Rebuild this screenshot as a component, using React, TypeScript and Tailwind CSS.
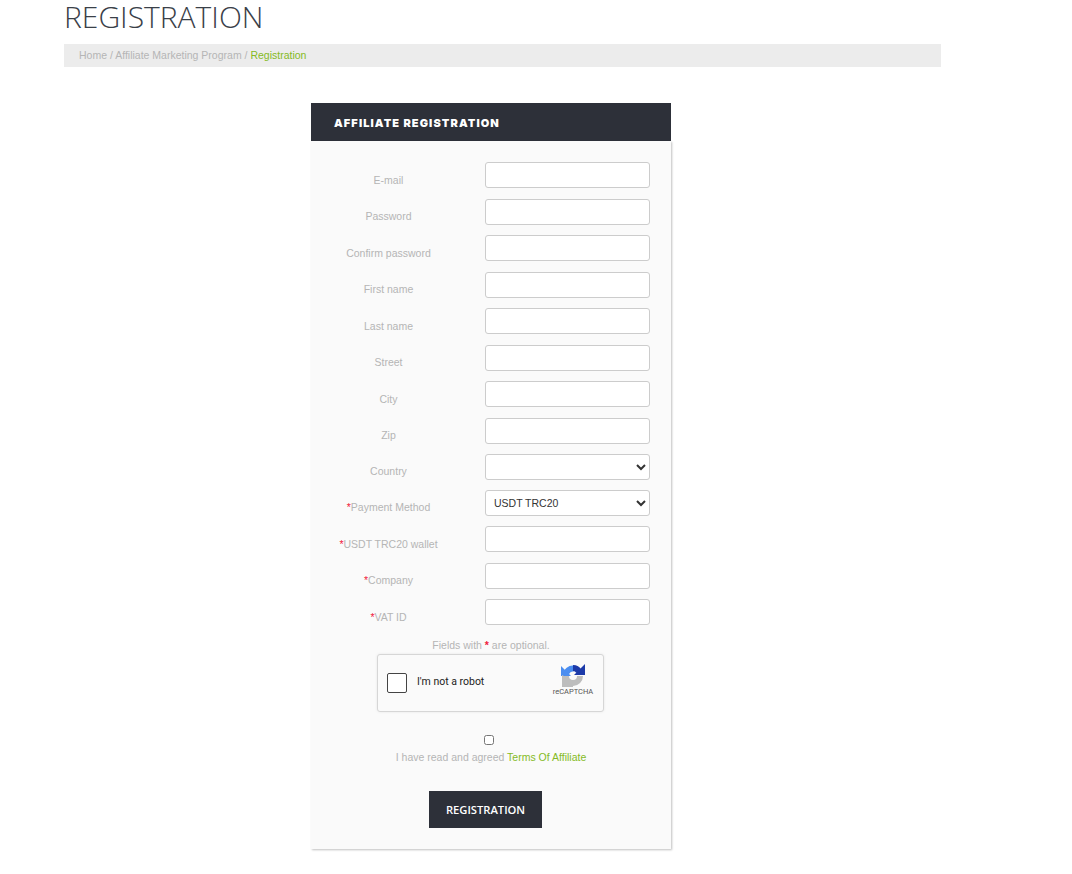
const FIELDS = [
  { label: "E-mail", h: "h-[36.5px]" },
  { label: "Password", h: "h-[36.5px]" },
  { label: "Confirm password", h: "h-[36.5px]" },
  { label: "First name", h: "h-[36.5px]" },
  { label: "Last name", h: "h-[36.5px]" },
  { label: "Street", h: "h-[36.5px]" },
  { label: "City", h: "h-[36.5px]" },
  { label: "Zip", h: "h-[36.5px]" },
  { label: "Country", h: "h-[36px]", select: true },
  { label: "Payment Method", h: "h-[36px]", select: true, mark: true, value: "USDT TRC20" },
  { label: "USDT TRC20 wallet", h: "h-[36.5px]", mark: true },
  { label: "Company", h: "h-[36.5px]", mark: true },
  { label: "VAT ID", h: "h-[36.5px]", mark: true },
];

function RecaptchaLogo() {
  return (
    <svg width="24" height="24" viewBox="0 0 24 24" fill="none">
      <path d="M13 5.5A7 7 0 0 0 5 12" stroke="#4a8df0" strokeWidth="6" />
      <path d="M0 3 L0 13 L10 13 Z" fill="#4a8df0" />
      <path d="M12 5A7 7 0 0 1 18 8.5" stroke="#1c3aa9" strokeWidth="6" />
      <path d="M24 1 L24 12 L13 12 Z" fill="#1c3aa9" />
      <path d="M19 13A7 7 0 0 1 5 13" stroke="#bdbdbd" strokeWidth="6" />
      <path d="M1 12 L1 24 L12 24 L12 18 Z" fill="#bdbdbd" />
    </svg>
  );
}

export default function App() {
  return (
    <div className="min-h-[874px] bg-white pl-[64px] font-['Liberation_Sans',Arial,sans-serif]">
      <h1 className="h-[44px] font-['Open_Sans',sans-serif] text-[30px] font-light leading-[34px] text-[#3a4048]">REGISTRATION</h1>
      <div className="flex h-[23px] w-[877px] items-center bg-[#ececec] pl-[15px] text-[10.5px] text-[#b5b5b5]">
        Home / Affiliate Marketing Program /&nbsp;<span className="text-[#85ba25]">Registration</span>
      </div>

      <div className="ml-[247px] mt-[36px] w-[360px]">
        <div className="flex h-[38px] items-center bg-[#2d3039] pl-[23px] pt-[3px] font-['Inter',sans-serif] text-[11px] font-black tracking-[1.1px] text-white">
          AFFILIATE REGISTRATION
        </div>
        <div className="h-[708px] bg-[#fafafa] pt-[21px] shadow-[1px_1px_2px_rgba(0,0,0,0.25)]">
          {FIELDS.map((f) => (
            <div key={f.label} className={`flex items-start ${f.h}`}>
              <label className={`${f.select ? "mt-[10px]" : "mt-[10.75px]"} w-[155px] text-center text-[10.5px] leading-[14px] text-[#b5b5b5]`}>
                {f.mark && <span className="text-[#f0203c]">*</span>}
                {f.label}
              </label>
              <div className="ml-[19px] w-[165px]">
                {f.select ? (
                  <select defaultValue={f.value ?? ""} className="h-[26px] w-full rounded-[3px] border border-[#cccccc] bg-white pl-[4px] text-[10.5px] text-[#333333]">
                    <option value=""></option>
                    <option value="USDT TRC20">USDT TRC20</option>
                  </select>
                ) : (
                  <input type="text" className="block h-[26px] w-full rounded-[3px] border border-[#cccccc] bg-white" />
                )}
              </div>
            </div>
          ))}

          <p className="mt-[2px] text-center text-[10.5px] leading-[14px] text-[#b5b5b5]">
            Fields with <span className="font-bold text-[#f0203c]">*</span> are optional.
          </p>
          <div className="ml-[66px] mt-[2px] flex h-[58px] w-[227px] items-center rounded-[3px] border border-[#d6d6d6] bg-[#fafafa] pl-[9px] shadow-[0_0_3px_rgba(0,0,0,0.08)]">
            <div className="h-[20px] w-[20px] rounded-[2px] border border-[#444444] bg-white" />
            <span className="mb-[2px] ml-[10px] font-['Roboto',sans-serif] text-[10.5px] text-[#222222]">I'm not a robot</span>
            <div className="mb-[6px] ml-auto mr-[9px] flex w-[42px] flex-col items-center">
              <RecaptchaLogo />
              <span className="whitespace-nowrap font-['Roboto',sans-serif] text-[7.5px] leading-[10px] text-[#555555]">reCAPTCHA</span>
            </div>
          </div>

          <div className="mt-[23px] flex justify-center pr-[5px]">
            <input type="checkbox" className="m-0 h-[10px] w-[10px]" />
          </div>
          <p className="mt-[5px] text-center text-[10.5px] leading-[14px] text-[#b5b5b5]">
            I have read and agreed <span className="text-[#85ba25]">Terms Of Affiliate</span>
          </p>
          <button className="ml-[118px] mt-[27px] block h-[37px] w-[113px] bg-[#2d3039] pt-[2px] font-['Open_Sans',sans-serif] text-[11.2px] font-semibold text-white">
            REGISTRATION
          </button>
        </div>
      </div>
    </div>
  );
}
